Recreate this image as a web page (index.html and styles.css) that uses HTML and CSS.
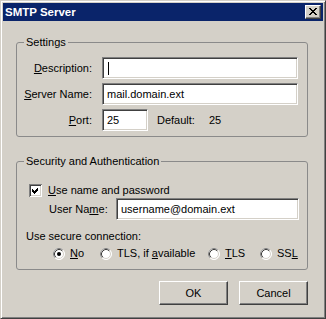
FILE: index.html
```html
<!DOCTYPE html>
<html lang="en">
<head>
  <meta charset="UTF-8">
  <title>SMTP Server</title>
  <link rel="stylesheet" href="styles.css">
</head>
<body>
  <div class="window">
    <div class="titlebar">
      <span class="title">SMTP Server</span>
      <span class="close-btn">
        <svg width="8" height="7" viewBox="0 0 8 7" shape-rendering="crispEdges">
          <path d="M0 0h2v1h-2z M6 0h2v1h-2z M1 1h2v1h-2z M5 1h2v1h-2z M2 2h4v1h-4z M3 3h2v1h-2z M2 4h4v1h-4z M1 5h2v1h-2z M5 5h2v1h-2z M0 6h2v1h-2z M6 6h2v1h-2z" fill="#000"/>
        </svg>
      </span>
    </div>

    <div class="client">
      <fieldset class="group settings">
        <legend>Settings</legend>
        <div class="form-grid">
          <label><u>D</u>escription:</label>
          <div class="field"><span class="caret"></span></div>

          <label><u>S</u>erver Name:</label>
          <div class="field">mail.domain.ext</div>

          <label><u>P</u>ort:</label>
          <div class="port-row">
            <div class="field port">25</div>
            <span class="default-label">Default:</span>
            <span class="default-value">25</span>
          </div>
        </div>
      </fieldset>

      <fieldset class="group security">
        <legend>Security and Authentication</legend>
        <div class="check-row">
          <svg class="checkbox" width="13" height="13" viewBox="0 0 13 13" shape-rendering="crispEdges">
            <rect x="2" y="2" width="9" height="9" fill="#fff"/>
            <path d="M0.5 12.5V0.5H12.5" fill="none" stroke="#808080"/>
            <path d="M1.5 11.5V1.5H11.5" fill="none" stroke="#404040"/>
            <path d="M1.5 11.5H11.5V1.5" fill="none" stroke="#d4d0c8"/>
            <path d="M0.5 12.5H12.5V0.5" fill="none" stroke="#fff"/>
            <path d="M3 5L5 7L9 3V6L5 10L3 8Z" fill="#000"/>
          </svg>
          <span><u>U</u>se name and password</span>
        </div>

        <div class="user-row">
          <label>User Na<u>m</u>e:</label>
          <div class="field user">username@domain.ext</div>
        </div>

        <div class="secure-label">Use secure connection:</div>

        <div class="radio-row">
          <div class="option opt-no">
            <svg class="radio" width="12" height="12" viewBox="0 0 12 12">
              <circle cx="6" cy="6" r="5.5" fill="#fff" stroke="#fff"/>
              <path d="M2.11 9.89A5.5 5.5 0 0 1 9.89 2.11" fill="none" stroke="#808080"/>
              <circle cx="6" cy="6" r="4.5" fill="#fff" stroke="#d4d0c8"/>
              <path d="M2.82 9.18A4.5 4.5 0 0 1 9.18 2.82" fill="none" stroke="#404040"/>
              <circle cx="6" cy="6" r="2" fill="#000"/>
            </svg>
            <span><u>N</u>o</span>
          </div>
          <div class="option opt-tlsif">
            <svg class="radio" width="12" height="12" viewBox="0 0 12 12">
              <circle cx="6" cy="6" r="5.5" fill="#fff" stroke="#fff"/>
              <path d="M2.11 9.89A5.5 5.5 0 0 1 9.89 2.11" fill="none" stroke="#808080"/>
              <circle cx="6" cy="6" r="4.5" fill="#fff" stroke="#d4d0c8"/>
              <path d="M2.82 9.18A4.5 4.5 0 0 1 9.18 2.82" fill="none" stroke="#404040"/>
            </svg>
            <span>TLS, if <u>a</u>vailable</span>
          </div>
          <div class="option opt-tls">
            <svg class="radio" width="12" height="12" viewBox="0 0 12 12">
              <circle cx="6" cy="6" r="5.5" fill="#fff" stroke="#fff"/>
              <path d="M2.11 9.89A5.5 5.5 0 0 1 9.89 2.11" fill="none" stroke="#808080"/>
              <circle cx="6" cy="6" r="4.5" fill="#fff" stroke="#d4d0c8"/>
              <path d="M2.82 9.18A4.5 4.5 0 0 1 9.18 2.82" fill="none" stroke="#404040"/>
            </svg>
            <span><u>T</u>LS</span>
          </div>
          <div class="option opt-ssl">
            <svg class="radio" width="12" height="12" viewBox="0 0 12 12">
              <circle cx="6" cy="6" r="5.5" fill="#fff" stroke="#fff"/>
              <path d="M2.11 9.89A5.5 5.5 0 0 1 9.89 2.11" fill="none" stroke="#808080"/>
              <circle cx="6" cy="6" r="4.5" fill="#fff" stroke="#d4d0c8"/>
              <path d="M2.82 9.18A4.5 4.5 0 0 1 9.18 2.82" fill="none" stroke="#404040"/>
            </svg>
            <span>SS<u>L</u></span>
          </div>
        </div>
      </fieldset>

      <div class="buttons">
        <button class="btn">OK</button>
        <button class="btn">Cancel</button>
      </div>
    </div>
  </div>
</body>
</html>
```

FILE: styles.css
```css
* {
  margin: 0;
  padding: 0;
  box-sizing: border-box;
}

body {
  font-family: "Liberation Sans", Arial, sans-serif;
  font-size: 11px;
  line-height: 13px;
  color: #000;
  background: #d4d0c8;
}

u {
  text-decoration: underline;
  text-underline-offset: 1px;
}

.window {
  width: 326px;
  height: 319px;
  background: #d4d0c8;
  border: 1px solid;
  border-color: #d4d0c8 #404040 #404040 #d4d0c8;
  box-shadow: inset 1px 1px #fff, inset -1px -1px #808080;
  padding: 2px;
}

.titlebar {
  height: 18px;
  background: #0a246a;
  color: #fff;
  display: flex;
  align-items: center;
  justify-content: space-between;
  padding: 0 2px 0 2px;
}

.title {
  font-weight: 700;
  font-size: 11.5px;
}

.close-btn {
  width: 16px;
  height: 14px;
  background: #d4d0c8;
  border: 1px solid;
  border-color: #fff #404040 #404040 #fff;
  box-shadow: inset -1px -1px #808080;
  display: flex;
  align-items: flex-start;
  padding: 2px 0 0 3px;
}

.close-btn svg {
  display: block;
}

.client {
  padding: 15px 15px 0 13px;
}

.group {
  border: 1px solid #8a8a8a;
  border-radius: 3px;
  padding: 0;
  margin: 0;
  width: 292px;
  min-inline-size: 0;
}

.group legend {
  margin-left: 7px;
  padding: 0 2px;
  line-height: 13px;
}

.form-grid {
  display: grid;
  grid-template-columns: 85px 196px;
  row-gap: 4px;
  align-items: center;
  padding: 8px 0 5px 0;
}

.form-grid label {
  text-align: right;
  padding-right: 10px;
}

.field {
  height: 22px;
  background: #fff;
  border: 1px solid;
  border-color: #808080 #fff #fff #808080;
  box-shadow: inset 1px 1px #404040, inset -1px -1px #d4d0c8;
  padding: 0 4px;
  display: flex;
  align-items: center;
  white-space: nowrap;
}

.caret {
  display: block;
  width: 1px;
  height: 13px;
  background: #000;
  margin-left: 1px;
}

.port-row {
  display: flex;
  align-items: center;
}

.field.port {
  width: 46px;
}

.default-label {
  margin-left: 9px;
}

.default-value {
  margin-left: 14px;
}

.security {
  margin-top: 18px;
  padding-bottom: 9px;
}

.check-row {
  display: flex;
  align-items: center;
  gap: 6px;
  height: 14px;
  margin: 15px 0 1px 12px;
}

.checkbox {
  display: block;
}

.user-row {
  display: flex;
  align-items: center;
  padding: 0 8px 0 32px;
}

.field.user {
  width: 183px;
  margin-left: auto;
}

.secure-label {
  margin: 10px 0 0 9px;
}

.radio-row {
  display: flex;
  align-items: center;
  margin-top: 4px;
  padding-left: 36px;
}

.option {
  display: flex;
  align-items: center;
  gap: 5px;
}

.radio {
  display: block;
  flex: none;
}

.opt-no {
  width: 47px;
}

.opt-tlsif {
  width: 108px;
}

.opt-tls {
  width: 52px;
}

.buttons {
  display: flex;
  justify-content: flex-end;
  gap: 11px;
  margin-top: 11px;
}

.btn {
  width: 69px;
  height: 24px;
  font-family: inherit;
  font-size: 11px;
  color: #000;
  background: #d4d0c8;
  border: 1px solid;
  border-color: #fff #404040 #404040 #fff;
  box-shadow: inset -1px -1px #808080;
}
```
